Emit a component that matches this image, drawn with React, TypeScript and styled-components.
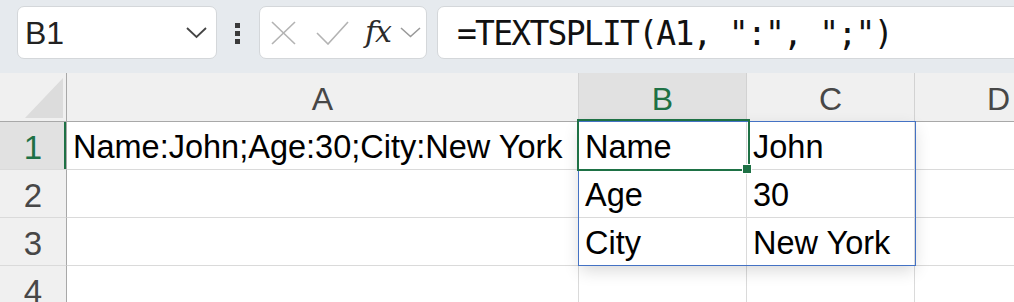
import styled, { createGlobalStyle } from "styled-components";

const GREEN = "#1e7145";

const GlobalStyle = createGlobalStyle`
  html, body {
    margin: 0;
    padding: 0;
    background: #ffffff;
    overflow: hidden;
  }
  body {
    font-family: "Liberation Sans", Arial, sans-serif;
  }
`;

const columns = ["A", "B", "C", "D"];

const rows = [
  ["Name:John;Age:30;City:New York", "Name", "John", ""],
  ["", "Age", "30", ""],
  ["", "City", "New York", ""],
  ["", "", "", ""],
];

const App = () => {
  return (
    <>
      <GlobalStyle />
      <Toolbar>
        <NameBox>
          <NameText>B1</NameText>
          <svg width="21" height="12" viewBox="0 0 21 12">
            <polyline points="1,1 10.5,10 20,1" fill="none" stroke="#444" strokeWidth="1.8" />
          </svg>
        </NameBox>
        <Dots>
          <Dot />
          <Dot />
          <Dot />
        </Dots>
        <FuncBox>
          <IconSlot $ml={11}>
            <svg width="25" height="24" viewBox="0 0 25 24">
              <line x1="1" y1="1" x2="24" y2="23" stroke="#b3b3b3" strokeWidth="1.6" />
              <line x1="24" y1="1" x2="1" y2="23" stroke="#b3b3b3" strokeWidth="1.6" />
            </svg>
          </IconSlot>
          <IconSlot $ml={20}>
            <svg width="33" height="24" viewBox="0 0 33 24">
              <polyline points="1,12 12,23 32,1" fill="none" stroke="#b3b3b3" strokeWidth="1.6" />
            </svg>
          </IconSlot>
          <Fx>fx</Fx>
          <IconSlot $ml={9}>
            <svg width="21" height="11" viewBox="0 0 21 11">
              <polyline points="1,1 10.5,9.5 20,1" fill="none" stroke="#9a9a9a" strokeWidth="1.6" />
            </svg>
          </IconSlot>
        </FuncBox>
        <FormulaBox>
          <Formula>=TEXTSPLIT(A1, ":", ";")</Formula>
        </FormulaBox>
      </Toolbar>

      <Sheet>
        <Grid>
          <Corner>
            <svg width="38" height="40" viewBox="0 0 38 40">
              <polygon points="38,0 38,40 0,40" fill="#dcdcdc" />
            </svg>
          </Corner>
          {columns.map((c) => (
            <ColHeader key={c} $active={c === "B"}>
              {c}
            </ColHeader>
          ))}
          {rows.map((r, i) => (
            <Row key={i} index={i} cells={r} />
          ))}
        </Grid>
        <SpillRange />
        <Selection />
        <FillHandle />
      </Sheet>
    </>
  );
};

const Row = ({ index, cells }: { index: number; cells: string[] }) => (
  <>
    <RowHeader $active={index === 0}>{index + 1}</RowHeader>
    {cells.map((v, j) => (
      <Cell key={j}>{v}</Cell>
    ))}
  </>
);

export default App;

const Toolbar = styled.div`
  display: flex;
  align-items: flex-start;
  height: 73px;
  box-sizing: border-box;
  padding: 6px 0 0 17px;
  background: #e6eaee;
  overflow: hidden;
`;

const Box = styled.div`
  display: flex;
  align-items: center;
  flex-shrink: 0;
  height: 53px;
  box-sizing: border-box;
  background: #ffffff;
  border: 1px solid #d4d7da;
  border-radius: 7px;
`;

const NameBox = styled(Box)`
  width: 200px;
  padding: 0 9px 0 7px;
  justify-content: space-between;
`;

const NameText = styled.span`
  font-family: "Liberation Sans", Arial, sans-serif;
  font-size: 32px;
  color: #222;
  padding-top: 2px;
`;

const Dots = styled.div`
  display: flex;
  flex-direction: column;
  gap: 3px;
  margin: 17px 19px 0 18px;
`;

const Dot = styled.div`
  width: 5px;
  height: 5px;
  background: #3a3a3a;
`;

const FuncBox = styled(Box)`
  width: 168px;
  margin-right: 10px;
`;

const IconSlot = styled.span<{ $ml: number }>`
  display: flex;
  margin-left: ${(p) => p.$ml}px;
`;

const Fx = styled.span`
  margin-left: 16px;
  font-family: "DejaVu Serif", "Liberation Serif", serif;
  font-style: italic;
  font-size: 30px;
  letter-spacing: -1px;
  color: #2b2b2b;
  padding-bottom: 2px;
`;

const FormulaBox = styled(Box)`
  flex: 1;
  margin-right: -20px;
  padding-left: 19px;
`;

const Formula = styled.span`
  font-family: "DejaVu Sans Mono", "Liberation Mono", monospace;
  font-size: 33px;
  letter-spacing: -1.75px;
  color: #111;
  white-space: pre;
  padding-top: 1px;
`;

const Sheet = styled.div`
  position: relative;
  height: 229px;
  overflow: hidden;
`;

const Grid = styled.div`
  display: grid;
  grid-template-columns: 67px 512px 168px 168px 168px;
  grid-template-rows: 49px repeat(4, 48px);
`;

const BaseCell = styled.div`
  display: flex;
  align-items: center;
  box-sizing: border-box;
  font-size: 32px;
  white-space: nowrap;
  border-right: 1px solid #dadada;
  border-bottom: 1px solid #dadada;
`;

const Corner = styled(BaseCell)`
  align-items: flex-end;
  justify-content: flex-end;
  padding: 0 3px 3px 0;
  background: #f0f0f0;
  border-right-color: #a8a8a8;
  border-bottom-color: #a8a8a8;
`;

const ColHeader = styled(BaseCell)<{ $active?: boolean }>`
  justify-content: center;
  padding-top: 5px;
  background: ${(p) => (p.$active ? "#e1e1e1" : "#f0f0f0")};
  color: ${(p) => (p.$active ? GREEN : "#474747")};
  border-right-color: #d2d2d2;
  border-bottom-color: #a8a8a8;
`;

const RowHeader = styled(BaseCell)<{ $active?: boolean }>`
  justify-content: center;
  padding-top: 4px;
  font-size: 33px;
  background: ${(p) => (p.$active ? "#e1e1e1" : "#f0f0f0")};
  color: ${(p) => (p.$active ? GREEN : "#474747")};
  border-right-color: #a8a8a8;
  box-shadow: ${(p) => (p.$active ? `inset -2px 0 0 ${GREEN}` : "none")};
`;

const Cell = styled(BaseCell)`
  padding: 4px 0 0 6px;
  font-size: 32.5px;
  background: #ffffff;
  color: #000;
`;

const SpillRange = styled.div`
  position: absolute;
  left: 578px;
  top: 48px;
  width: 338px;
  height: 145px;
  box-sizing: border-box;
  border: 1px solid #4472c4;
  box-shadow: 0 6px 16px -2px rgba(0, 0, 0, 0.16);
  pointer-events: none;
`;

const Selection = styled.div`
  position: absolute;
  left: 577px;
  top: 46px;
  width: 173px;
  height: 52px;
  box-sizing: border-box;
  border: 2px solid ${GREEN};
  pointer-events: none;
`;

const FillHandle = styled.div`
  position: absolute;
  left: 742px;
  top: 91px;
  width: 10px;
  height: 10px;
  box-sizing: border-box;
  background: ${GREEN};
  border: 1px solid #ffffff;
`;
